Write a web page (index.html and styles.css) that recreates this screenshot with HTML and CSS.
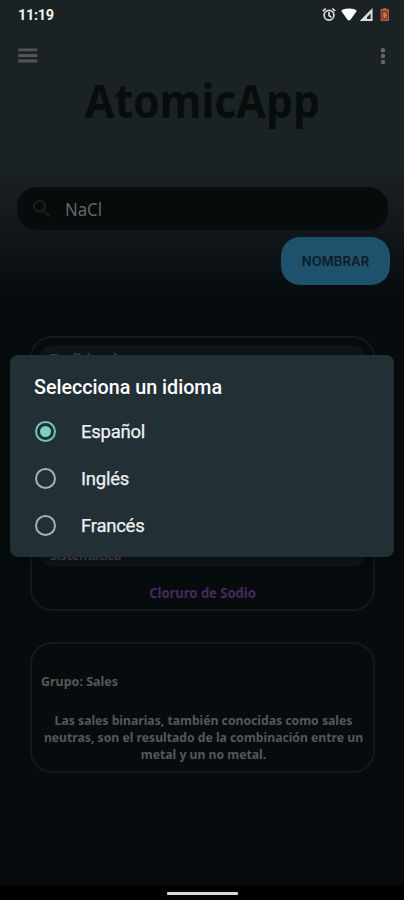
FILE: index.html
```html
<!DOCTYPE html>
<html lang="es">
<head>
<meta charset="utf-8">
<title>AtomicApp</title>
<link rel="stylesheet" href="styles.css">
</head>
<body>
<div class="screen">
  <header class="status">
    <span class="clock">11:19</span>
    <svg class="status-icons" width="68" height="18" viewBox="0 0 68 18">
      <g fill="none" stroke="#dcdedf" stroke-width="1.7">
        <circle cx="8" cy="9.2" r="4.900"/>
        <path d="M1.800 5.200 4.700 2.500M14.200 5.200 11.300 2.500M8 6v3.500l2.400 1.700"/>
      </g>
      <path fill="#fff" d="M20.300 5Q21 2.600 28 2.400Q35 2.600 35.700 5L29.500 13.700Q28 15.300 26.500 13.700Z"/>
      <path fill="#dcdedf" fill-rule="evenodd" d="M51.500 2V15H38.700ZM49.600 7.400 46 11.200V13H49.600Z"/>
      <path fill="#b5583f" d="M60.200 3h2V2h3v1h2q.8 0 .8.8V14q0 .9-.9.900h-6.600q-.9 0-.9-.9V3.800q0-.8.6-.8z"/>
      <path fill="none" stroke="#47302b" stroke-width=".8" d="M61.200 13V5.500h5V13M61.500 13h4.500"/>
      <path fill="none" stroke="#e07a4d" stroke-width="1" d="M63.700 7v4.500M61.800 9.300h4"/>
    </svg>
  </header>
  <nav class="toolbar">
    <svg width="20" height="16" viewBox="0 0 20 16" fill="#505658"><path d="M.3 .5h19v2.800H.3zM.3 6.100h19v2.800H.3zM.3 11.600h19v2.800H.3z"/></svg>
    <svg width="6" height="18" viewBox="0 0 6 18" fill="#626769"><circle cx="3" cy="3.200" r="2.200"/><circle cx="3" cy="9" r="2.200"/><circle cx="3" cy="15" r="2.200"/></svg>
  </nav>
  <h1 class="title"><span>AtomicApp</span></h1>
  <div class="search">
    <svg width="20" height="20" viewBox="0 0 20 20" fill="none" stroke="#1c2021" stroke-width="1.900"><circle cx="7.400" cy="7.200" r="5.500"/><path d="m11.500 11.300 6 6"/></svg>
    <span class="query">NaCl</span>
  </div>
  <button class="action"><span>NOMBRAR</span></button>
  <main class="results">
    <section class="card names">
      <div class="band">Tradicional</div>
      <div class="band">Sistemática</div>
      <p class="compound">Cloruro de Sodio</p>
    </section>
    <section class="card group">
      <h2>Grupo: Sales</h2>
      <p>Las sales binarias, también conocidas como sales<br>neutras, son el resultado de la combinación entre un<br>metal y un no metal.</p>
    </section>
  </main>
  <footer class="home"><div></div></footer>
  <div class="dialog">
    <h2>Selecciona un idioma</h2>
    <div class="option selected"><i></i><span>Español</span></div>
    <div class="option"><i></i><span>Inglés</span></div>
    <div class="option"><i></i><span>Francés</span></div>
  </div>
</div>
</body>
</html>
```

FILE: styles.css
```css
* { box-sizing: border-box; }
body { margin: 0; background: #060c0d; }
h1, h2, p { margin: 0; }
.screen {
  position: relative;
  display: flex;
  flex-direction: column;
  width: 404px;
  height: 900px;
  overflow: hidden;
  font-family: "Noto Sans", sans-serif;
  background: linear-gradient(#1a2224 0, #1a2224 165px, #151b1e 205px, #0d1317 250px, #060c0d 295px, #060c0d 100%);
}
.status {
  display: flex;
  justify-content: space-between;
  align-items: center;
  height: 30px;
  padding: 0 15px 0 18px;
}
.clock { font: 700 14.5px/30px Roboto, sans-serif; color: #f2f4f4; letter-spacing: -.3px; padding-top: 2px; }
.toolbar {
  display: flex;
  justify-content: space-between;
  align-items: center;
  height: 51px;
  padding: 0 18px;
}
.title {
  height: 40px;
  font-size: 46px;
  line-height: 38px;
  text-align: center;
  color: #070c0d;
}
.title span { display: inline-block; transform: scaleX(.93); }
.search {
  display: flex;
  align-items: center;
  gap: 13px;
  flex: none;
  width: 371px;
  height: 43px;
  margin: 66px 0 0 17px;
  padding-left: 15px;
  border-radius: 20px;
  background: #060b0c;
}
.query { font-size: 18px; color: #646768; transform: scaleX(.93); transform-origin: left; }
.action {
  flex: none;
  align-self: flex-end;
  width: 109px;
  height: 48px;
  margin: 7px 14px 0 0;
  padding: 0;
  border: 0;
  border-radius: 19px;
  background: #1e516b;
  color: #0c1d27;
  font: 600 13px Inter, sans-serif;
}
.action span { display: inline-block; letter-spacing: .1px; }
.results {
  display: flex;
  flex-direction: column;
  gap: 31px;
  flex: 1;
  padding: 51px 29px 0 30px;
}
.card { border: 2px solid #14191a; border-radius: 22px; }
.names { height: 275px; padding: 8px; display: flex; flex-direction: column; }
.band {
  flex: none;
  height: 24px;
  padding-left: 10px;
  border-radius: 11px;
  background: #111518;
  color: #454849;
  font-size: 13px;
  font-weight: 700;
  letter-spacing: -.4px;
  line-height: 24px;
}
.band:nth-child(2) { margin-top: 172px; line-height: 27px; }
.compound {
  margin-top: 17px;
  line-height: 19px;
  text-align: center;
  font-size: 14px;
  font-weight: 700;
  color: #49285b;
  transform: scaleX(.93);
}
.group { height: 131px; padding: 27px 0 0 9px; color: #555859; font-size: 13px; font-weight: 700; }
.group h2 { height: 41px; font-size: 13px; line-height: 20px; transform: scaleX(.96); transform-origin: left; }
.group p { width: 345px; margin-left: -10px; line-height: 17px; text-align: center; white-space: nowrap; transform: scaleX(.938); }
.home { display: flex; justify-content: center; height: 15px; padding-top: 7px; background: #000; }
.home div { width: 71px; height: 3px; border-radius: 1px; background: #d5d6d6; }
.dialog {
  position: absolute;
  left: 10px;
  top: 355px;
  width: 384px;
  height: 202px;
  padding: 17px 24px 0;
  border-radius: 8px;
  background: #222f35;
  box-shadow: 0 3px 8px rgba(0, 0, 0, .4);
  color: #eef1f2;
  font-family: Roboto, sans-serif;
}
.dialog h2 { height: 36px; font-size: 19.700px; font-weight: 500; line-height: 32px; color: #fff; }
.option { display: flex; align-items: center; gap: 25px; height: 47px; padding-left: 1px; font-size: 18.500px; }
.option span { letter-spacing: -.25px; -webkit-text-stroke: .25px; }
.option i {
  display: grid;
  place-items: center;
  width: 21px;
  height: 21px;
  border: 2px solid #a7b0b7;
  border-radius: 50%;
}
.selected i { border-color: #70c5b8; }
.selected i::after { content: ""; width: 11px; height: 11px; border-radius: 50%; background: #7bd2c4; }
```
